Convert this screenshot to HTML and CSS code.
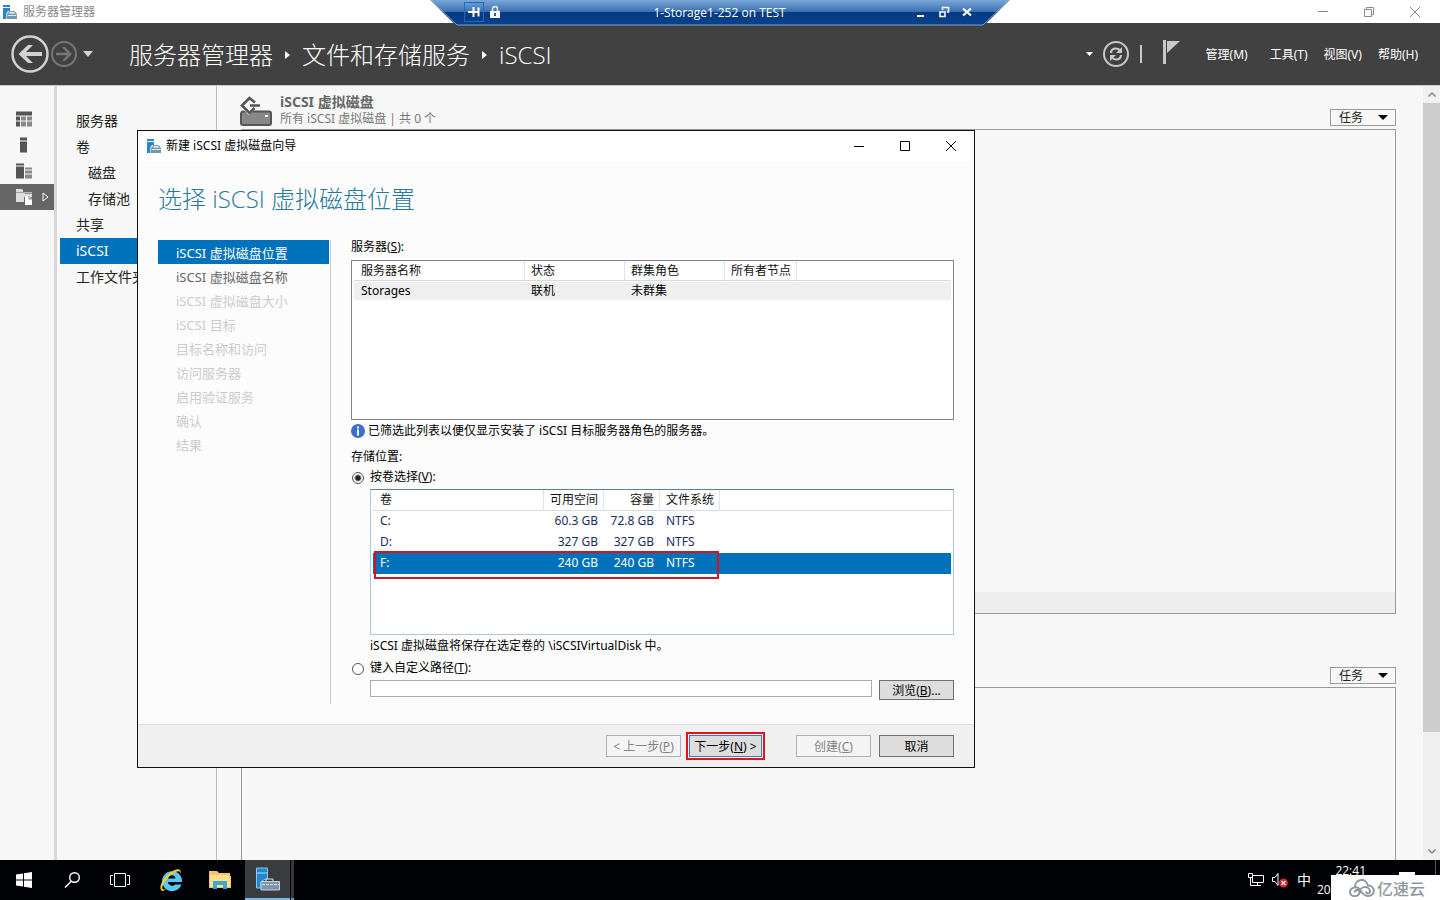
FILE: index.html
```html
<!DOCTYPE html>
<html lang="zh-CN">
<head>
<meta charset="utf-8">
<title>服务器管理器</title>
<link rel="stylesheet" href="styles.css">
</head>
<body>
<svg width="0" height="0" class="defs" aria-hidden="true">
  <symbol id="server" viewBox="0 0 14 14">
    <path d="M0 0h7v2H0zM0 3h7v3H5L3 9v5H0z" fill="#2588c8"/>
    <path d="M3.500 8.500h10.500V14H3.500z" fill="#7297b3"/>
    <path d="M5 8.500L7 6.500h4l2 2" fill="none" stroke="#7297b3" stroke-width="1.200"/>
    <path d="M4.500 10.500h9" stroke="#dce8f0"/>
  </symbol>
</svg>

<header class="titlebar">
  <svg class="app-icon" viewBox="0 0 14 14"><use href="#server"/></svg>
  <span class="titlebar-text">服务器管理器</span>
  <button class="caption" aria-label="最小化"><svg viewBox="0 0 12 12"><path d="M1 5.500h10"/></svg></button>
  <button class="caption" aria-label="还原"><svg viewBox="0 0 12 12"><path d="M1.500 3.500h7v7h-7zM3.500 3V1.500h7v7H9"/></svg></button>
  <button class="caption" aria-label="关闭"><svg viewBox="0 0 12 12"><path d="M1 1l10 10M11 1L1 11"/></svg></button>
</header>

<div class="rdp">
  <svg class="rdp-shape" viewBox="0 0 580 26" preserveAspectRatio="none">
    <defs><linearGradient id="rg" x1="0" y1="0" x2="0" y2="1"><stop offset="0" stop-color="#7ba7d8"/><stop offset=".46" stop-color="#3a70b0"/><stop offset=".48" stop-color="#053a80"/><stop offset="1" stop-color="#07428f"/></linearGradient></defs>
    <path d="M0 0h580l-26 25.500H26z" fill="url(#rg)"/>
    <path d="M1 0l26 25h526l26-25" fill="none" stroke="#8d9db3"/>
  </svg>
  <div class="rdp-row">
    <button class="rdp-btn pin" aria-label="固定"><svg viewBox="0 0 12 12"><path d="M0 6h5M5.500 1v10M6 6h5M10.500 1.500v9" stroke-width="2"/></svg></button>
    <svg class="lock" viewBox="0 0 10 12"><path d="M2.500 6V3a2.500 2.500 0 0 1 5 0v3" fill="none" stroke="#fff" stroke-width="1.400"/><path d="M0 5h10v7H0z" fill="#fff"/><path d="M5 7v3" stroke="#124" stroke-width="1.500"/></svg>
    <span class="rdp-title">1-Storage1-252 on TEST</span>
    <button class="rdp-btn" aria-label="最小化"><svg viewBox="0 0 12 12"><path d="M2 10h7" stroke-width="2"/></svg></button>
    <button class="rdp-btn" aria-label="还原"><svg viewBox="0 0 12 12"><path d="M2 6h5v4.500H2zM4.500 4V1.500h6V6H9" stroke-width="1.500"/></svg></button>
    <button class="rdp-btn" aria-label="关闭"><svg viewBox="0 0 12 12"><path d="M2 2.500l8 7M10 2.500l-8 7" stroke-width="2.200"/></svg></button>
  </div>
</div>

<div class="banner">
  <button class="round back" aria-label="后退"><svg viewBox="0 0 38 38"><circle cx="19" cy="19" r="17.500" fill="none" stroke="#d2d2d2" stroke-width="2.500"/><path d="M7.500 19L17 10h5l-7 7h16v4H15l7 7h-5z" fill="#d2d2d2"/></svg></button>
  <button class="round forward" aria-label="前进"><svg viewBox="0 0 26 26"><circle cx="13" cy="13" r="12" fill="none" stroke="#777" stroke-width="2"/><path d="M21 13l-7-7h-3l5 5.700H5v2.600h11L11 20h3z" fill="#777"/></svg></button>
  <button class="drop" aria-label="历史记录"><svg viewBox="0 0 10 6"><path d="M0 0h10L5 6z" fill="#d2d2d2"/></svg></button>
  <nav class="crumbs">
    <a href="#">服务器管理器</a><svg viewBox="0 0 5 8"><path d="M0 0l5 4-5 4z"/></svg><a href="#">文件和存储服务</a><svg viewBox="0 0 5 8"><path d="M0 0l5 4-5 4z"/></svg><a href="#">iSCSI</a>
  </nav>
  <svg class="mini-arrow" viewBox="0 0 7 4"><path d="M0 0h7L3.500 4z" fill="#fff"/></svg>
  <button class="refresh" aria-label="刷新"><svg viewBox="0 0 26 26"><g fill="none" stroke="#c8c8c8" stroke-width="2"><circle cx="13" cy="13" r="12"/><path d="M8 12c0-3 2-4.500 5-4.500 2 0 3 .5 4 2M18 14c0 3-2 4.500-5 4.500-2 0-3-.5-4-2" stroke-width="2.200"/></g><path d="M19 6v6h-6zM7 20v-6h6z" fill="#c8c8c8"/></svg></button>
  <span class="bar"></span>
  <button class="flag" aria-label="通知"><svg viewBox="0 0 17 24"><path d="M0 0h3v24H0zM4 1h13L4 13z" fill="#c8c8c8"/></svg></button>
  <nav class="menu"><button class="wide">管理(M)</button><button>工具(T)</button><button>视图(V)</button><button>帮助(H)</button></nav>
</div>

<main class="workspace">
  <nav class="rail">
    <button aria-label="仪表板"><svg viewBox="0 0 16 15"><path d="M0 0h16v4H0zM0 5h4v4H0zM0 10h4v5H0z" fill="#555"/><path d="M5 5h5v4H5zM11 5h5v4h-5zM5 10h5v5H5zM11 10h5v5h-5z" fill="#888"/></svg></button>
    <button aria-label="本地服务器"><svg viewBox="0 0 16 15"><path d="M4 0h7v3H4zM4 4h7v11H4z" fill="#555"/></svg></button>
    <button aria-label="所有服务器"><svg viewBox="0 0 16 15"><path d="M0 0h8v2H0zM0 3h8v12H0z" fill="#555"/><path d="M9 4h7v2H9zM9 7h7v3H9zM9 11h7v4H9z" fill="#888"/></svg></button>
    <button class="current" aria-label="文件和存储服务"><svg viewBox="0 0 16 16"><path d="M0 0h6l1 1v2H0zM0 3.500h9V5h7v3H8v5H0z" fill="#ddd"/><path d="M8 3h8v1.500H8z" fill="#bbb"/><path d="M9 7h4l3 3v6H9z" fill="#fff"/><path d="M13 7v3h3" fill="none" stroke="#666" stroke-width=".8"/></svg><svg class="rail-arrow" viewBox="0 0 7 10"><path d="M1 1l5 4-5 4z" fill="none" stroke="#fff"/></svg></button>
  </nav>
  <nav class="side">
    <a href="#">服务器</a><a href="#">卷</a><a class="sub" href="#">磁盘</a><a class="sub" href="#">存储池</a><a href="#">共享</a><a class="current" href="#">iSCSI</a><a href="#">工作文件夹</a>
  </nav>
  <div class="content">
    <section class="tile">
      <div class="tile-head">
        <svg class="tile-icon" viewBox="0 0 32 30"><path d="M3 15.500h26a2 2 0 0 1 2 2V27a2 2 0 0 1-2 2H3a2 2 0 0 1-2-2v-9.500a2 2 0 0 1 2-2z" fill="#888" stroke="#555" stroke-width="2"/><path d="M25 19h3v2h-3z" fill="#fff"/><path d="M9 1L0 10l9 9 9-9z" fill="#f7f7f7"/><path d="M15 6.500L9.500 2 2 9.500 9.500 17l5-5M10 9.500h10" fill="none" stroke="#555" stroke-width="2.600"/></svg>
        <div class="tile-name"><h2>iSCSI 虚拟磁盘</h2><p>所有 iSCSI 虚拟磁盘 | 共 0 个</p></div>
        <button class="tasks">任务<svg viewBox="0 0 10 5"><path d="M0 0h10L5 5z"/></svg></button>
      </div>
      <div class="panel"><div class="panel-foot"></div></div>
    </section>
    <section class="tile lower">
      <div class="tile-head"><button class="tasks">任务<svg viewBox="0 0 10 5"><path d="M0 0h10L5 5z"/></svg></button></div>
      <div class="panel"></div>
    </section>
  </div>
  <div class="scroll">
    <svg viewBox="0 0 8 5"><path d="M0.500 4.500L4 1l3.500 3.500"/></svg>
    <div class="track"><div class="thumb"></div></div>
    <svg viewBox="0 0 8 5"><path d="M0.500 .5L4 4 7.500 .5"/></svg>
  </div>
</main>

<form class="dialog" role="dialog" aria-labelledby="dlg-title">
  <div class="dlg-bar">
    <svg class="app-icon" viewBox="0 0 14 14"><use href="#server"/></svg>
    <span id="dlg-title" class="dlg-name">新建 iSCSI 虚拟磁盘向导</span>
    <button type="button" aria-label="最小化"><svg viewBox="0 0 12 12"><path d="M1 6.500h10"/></svg></button>
    <button type="button" aria-label="最大化"><svg viewBox="0 0 12 12"><path d="M1.500 1.500h9v9h-9z"/></svg></button>
    <button type="button" aria-label="关闭"><svg viewBox="0 0 12 12"><path d="M1 1l10 10M11 1L1 11"/></svg></button>
  </div>
  <h1>选择 iSCSI 虚拟磁盘位置</h1>
  <div class="dlg-body">
    <ol class="steps">
      <li class="current">iSCSI 虚拟磁盘位置</li><li class="next">iSCSI 虚拟磁盘名称</li><li>iSCSI 虚拟磁盘大小</li><li>iSCSI 目标</li><li>目标名称和访问</li><li>访问服务器</li><li>启用验证服务</li><li>确认</li><li>结果</li>
    </ol>
    <div class="fields">
      <div class="caption-line" id="srv">服务器(<u>S</u>):</div>
      <div class="listbox servers">
        <table aria-labelledby="srv">
          <colgroup><col class="c-name"><col class="c-100"><col class="c-100"><col class="c-owner"><col></colgroup>
          <thead><tr><th>服务器名称</th><th>状态</th><th>群集角色</th><th>所有者节点</th><td></td></tr></thead>
          <tbody><tr><td>Storages</td><td>联机</td><td>未群集</td><td></td><td></td></tr></tbody>
        </table>
      </div>
      <p class="info"><svg viewBox="0 0 14 14"><circle cx="7" cy="7" r="7" fill="#3d6fd0"/><path d="M6 2.500h2v2H6zM6 5.500h2v6H6z" fill="#fff"/></svg>已筛选此列表以便仅显示安装了 iSCSI 目标服务器角色的服务器。</p>
      <div class="group">存储位置:</div>
      <div class="choice"><input type="radio" name="loc" id="vol" checked><label for="vol">按卷选择(<u>V</u>):</label></div>
      <div class="listbox volumes">
        <table aria-label="卷">
          <colgroup><col class="c-name"><col class="c-60"><col class="c-cap"><col class="c-60"><col></colgroup>
          <thead><tr><th>卷</th><th class="num">可用空间</th><th class="num">容量</th><th>文件系统</th><td></td></tr></thead>
          <tbody>
            <tr><td>C:</td><td class="num">60.3 GB</td><td class="num">72.8 GB</td><td>NTFS</td><td></td></tr>
            <tr><td>D:</td><td class="num">327 GB</td><td class="num">327 GB</td><td>NTFS</td><td></td></tr>
            <tr class="selected"><td>F:</td><td class="num">240 GB</td><td class="num">240 GB</td><td>NTFS</td><td></td></tr>
          </tbody>
        </table>
        <div class="mark"></div>
      </div>
      <p class="note">iSCSI 虚拟磁盘将保存在选定卷的 \iSCSIVirtualDisk 中。</p>
      <div class="choice custom"><input type="radio" name="loc" id="path"><label for="path">键入自定义路径(<u>T</u>):</label></div>
      <div class="path-row"><input type="text" aria-label="自定义路径"><button type="button" class="btn browse">浏览(<u>B</u>)...</button></div>
    </div>
  </div>
  <div class="dlg-foot">
    <button type="button" class="btn" disabled>&lt; 上一步(<u>P</u>)</button>
    <button type="button" class="btn primary">下一步(<u>N</u>) &gt;</button>
    <button type="button" class="btn create" disabled>创建(<u>C</u>)</button>
    <button type="button" class="btn">取消</button>
  </div>
</form>

<footer class="taskbar">
  <button aria-label="开始"><svg class="s16" viewBox="0 0 16 16"><path d="M0 2.500l7-1v6H0zM8 1.300L16 0v7.500H8zM0 8.500h7v6l-7-1zM8 8.500h8V16l-8-1.300z" fill="#fff"/></svg></button>
  <button aria-label="搜索"><svg class="s16" viewBox="0 0 16 16"><path d="M1 15.500l6-6" stroke="#fff" stroke-width="1.500"/><circle cx="10.500" cy="5.500" r="4.800" fill="none" stroke="#fff" stroke-width="1.400"/></svg></button>
  <button aria-label="任务视图"><svg class="s20" viewBox="0 0 20 16"><path d="M4.500 1.500h11v13h-11zM3 3.500H.5v9H3M17 3.500h2.500v9H17" fill="none" stroke="#fff"/></svg></button>
  <button class="pinned" aria-label="Internet Explorer"><svg class="s24" viewBox="0 0 24 24"><path d="M22.500 16.500A10 10 0 1 1 23 12v2H9c.4 4 5.600 4.700 7 2.500zM9 10.500h7.500c-.5-4.300-7-4.300-7.500 0z" fill="#5cc6f2"/><path d="M2.500 22.500C-2 18 8 4.500 17 1.500c4-1 5.500.8 4 4.500.5-3-1.500-3.400-4-2.300C9.500 7.500 2 17 3.500 21c.7 1.300 3 .3 5-1-2 1.900-4.800 4-6 2.500z" fill="#f5cd35"/></svg></button>
  <button class="pinned" aria-label="文件资源管理器"><svg class="s22" viewBox="0 0 22 20"><path d="M0 1h8l2 2h11v3h1v12H0z" fill="#f2c861"/><path d="M1 5h19v2h1v10H1z" fill="#fbdf8f"/><path d="M4 19v-8h14v8h-4v-4H8v4z" fill="#3ea6d4"/></svg></button>
  <button class="active" aria-label="服务器管理器"><svg class="s24" viewBox="0 0 24 24"><path d="M.5 1h11v11H9l-4 3v6H.5z" fill="#1e88d0" stroke="#8bc5ed"/><path d="M.5 6h11" stroke="#b9ddf5"/><path d="M5 14.500h18.500V23H5z" fill="#7f95ab" stroke="#c5d2de"/><path d="M10 14v-2h7v2" fill="none" stroke="#d8e1e9"/><path d="M6 17.500h17" stroke="#d8e1e9" stroke-dasharray="3 1"/></svg></button>
  <span class="stack"></span>
  <div class="tray">
    <svg class="s16" viewBox="0 0 16 14"><path d="M4.500 2.500h11v7h-11zM9.500 10v2.500M6 12.500h7M.5.500h4v4h-4zM2.500 5v7.500H6" fill="none" stroke="#fff"/></svg>
    <svg class="s16 sound" viewBox="0 0 16 16"><path d="M.5 5.500H3l3-4v12l-3-4H.5z" fill="none" stroke="#fff"/><circle cx="11.500" cy="11" r="4.500" fill="#d92332"/><path d="M9.500 9l4 4M13.500 9l-4 4" stroke="#fff" stroke-width="1.200"/></svg>
    <span class="ime">中</span>
    <div class="clock"><span>22:41</span><span class="date">20</span></div>
  </div>
  <span class="notice"></span>
  <span class="peek"></span>
  <div class="watermark"><svg viewBox="0 0 26 18"><g fill="none" stroke="#91969d" stroke-width="2"><path d="M6 8C6 0 17-2 19 6.500c7.500 0 8 10.500 0 10.500-4 0-6-3-8-6-3-5-10-2-10 2 0 6 10 5 9.500 0-.5-3-5-2.500-4.500.5"/><path d="M11 14c-1-7 9-8 10-2 .5 3-4 3-4 .5"/></g></svg><span>亿速云</span></div>
</footer>
</body>
</html>
```

FILE: styles.css
```css
* { box-sizing: border-box; }
body {
  margin: 0; height: 100vh; display: flex; flex-direction: column; position: relative; overflow: hidden;
  font: 12px/18px "Noto Sans", "Noto Sans CJK SC", sans-serif; color: #000; background: #f7f7f7;
}
button { font: inherit; color: inherit; background: none; border: 0; padding: 0; }
a { color: inherit; text-decoration: none; }
h1, h2, p, ol { margin: 0; padding: 0; font-weight: 400; }
svg { display: block; flex: none; }
.defs { position: absolute; }

.titlebar { height: 23px; flex: none; display: flex; align-items: center; background: #fff; color: #888; padding-left: 3px; }
.app-icon { width: 14px; height: 14px; }
.titlebar-text { flex: 1; padding-left: 6px; }
.caption { width: 46px; height: 20px; display: grid; place-items: center; }
.caption svg { width: 12px; height: 12px; fill: none; stroke: #888; }
.caption:last-child { margin-right: 2px; }

.rdp { position: absolute; top: 0; left: 50%; width: 580px; height: 26px; margin-left: -290px; color: #fff; z-index: 3; }
.rdp-shape { position: absolute; width: 100%; height: 100%; }
.rdp-row { position: relative; height: 24px; display: flex; align-items: center; padding: 0 32px 0 34px; }
.rdp-btn { width: 23px; height: 20px; display: grid; place-items: center; }
.rdp-btn.pin { width: 20px; border: 1px solid #176cc4; }
.rdp-btn svg { width: 12px; height: 12px; fill: none; stroke: #fff; }
.lock { width: 10px; height: 12px; margin-left: 6px; }
.rdp-title { flex: 1; text-align: center; padding: 2px 0 0 30px; font-family: "Open Sans", sans-serif; }

.banner { height: 62px; flex: none; display: flex; align-items: center; background: #414141; color: #fff; padding: 0 21px 0 11px; }
.back svg { width: 38px; height: 38px; }
.forward { margin-left: 2px; }
.forward svg, .refresh svg { width: 26px; height: 26px; }
.drop { margin-left: 6px; }
.drop svg { width: 10px; height: 6px; }
.crumbs { flex: 1; display: flex; align-items: center; gap: 12px; margin-left: 36px; font: 300 24px/36px "Open Sans", "Noto Sans CJK SC", sans-serif; padding-top: 1px; white-space: nowrap; }
.crumbs svg { width: 5px; height: 8px; fill: #fff; }
.mini-arrow { width: 7px; height: 4px; margin-right: 10px; }
.bar { width: 2px; height: 18px; background: #c8c8c8; margin: 0 21px 0 11px; }
.flag svg { width: 17px; height: 24px; margin-bottom: 4px; }
.menu { display: flex; gap: 16px; margin-left: 26px; padding-top: 2px; white-space: nowrap; }
.menu .wide { margin-right: 6px; }
.menu { margin-right: 1px; }

.workspace { flex: 1; min-height: 0; display: flex; border-top: 1px solid #ccc; }
.rail { width: 57px; border-right: 3px solid #d9d9d9; padding-top: 20px; flex: none; }
.rail button { width: 100%; height: 26px; display: flex; align-items: center; gap: 10px; padding-left: 16px; }
.rail svg { width: 16px; height: 16px; }
.rail .rail-arrow { width: 7px; height: 10px; }
.rail .current { background: #666; }
.side { width: 160px; border-right: 1px solid #bbb; padding: 22px 0 0 3px; flex: none; overflow: hidden; }
.side a { display: block; height: 26px; line-height: 26px; font-size: 14px; padding-left: 16px; white-space: nowrap; color: #222; }
.side .sub { padding-left: 28px; }
.side .current { background: #0072bc; color: #fff; }
.content { flex: 1; min-width: 0; padding: 7px 27px 0 24px; display: flex; flex-direction: column; }
.tile-head { display: flex; align-items: flex-end; height: 36px; padding-bottom: 3px; }
.tile-icon { width: 32px; height: 30px; margin: 2px 8px 0 -1px; align-self: center; }
.tile-name { color: #666; align-self: flex-start; }
.tile-name h2 { font-size: 14px; line-height: 18px; font-weight: 700; }
.tile-name p { line-height: 16px; color: #777; }
.tasks { width: 66px; height: 17px; line-height: 15px; border: 1px solid #999; margin-left: auto; display: flex; align-items: center; justify-content: space-between; padding: 0 7px 0 8px; color: #222; }
.tasks svg { width: 10px; height: 5px; }
.panel { border: 1px solid #999; height: 485px; display: flex; align-items: flex-end; }
.panel-foot { flex: 1; height: 21px; background: #eee; }
.lower { padding-top: 37px; flex: 1; min-height: 0; display: flex; flex-direction: column; }
.lower .tile-head { flex: none; }
.lower .panel { flex: 1; height: auto; border-bottom: 0; }
.scroll { width: 17px; background: #f0f0f0; display: flex; flex-direction: column; align-items: center; padding: 6px 0; }
.scroll svg { width: 8px; height: 5px; fill: none; stroke: #888; stroke-width: 1.5; }
.track { flex: 1; width: 100%; padding: 6px 0; }
.thumb { height: 85%; background: #cdcdcd; }

.dialog { position: absolute; left: 137px; top: 130px; width: 838px; border: 1px solid #111; background: #fcfcfc; z-index: 2; }
.dlg-bar { height: 30px; display: flex; align-items: center; background: #fff; padding-left: 9px; }
.dlg-name { flex: 1; padding-left: 5px; }
.dlg-bar button { width: 46px; height: 28px; display: grid; place-items: center; }
.dlg-bar button svg { width: 12px; height: 12px; fill: none; stroke: #000; }
h1 { font: 300 24px/36px "Open Sans", "Noto Sans CJK SC", sans-serif; color: #27799b; margin: 20px 20px 23px; }
.dlg-body { display: flex; padding: 0 20px 20px; }
.steps { width: 173px; list-style: none; border-right: 1px solid #ccc; flex: none; min-height: 464px; padding-right: 1px; }
.steps li { height: 24px; line-height: 26px; font-size: 13px; padding-left: 18px; color: #ccc; white-space: nowrap; }
.steps .current { background: #0072bc; color: #fff; }
.steps .next { color: #666; }
.fields { flex: 1; min-width: 0; padding-left: 20px; }
.caption-line { line-height: 14px; margin-bottom: 6px; }
.listbox { background: #fff; border: 1px solid #828790; padding: 0 2px; position: relative; }
.servers { height: 160px; }
.volumes { height: 146px; margin: 3px 0 2px 19px; border-color: #abc9d6; border-top-color: #5b7f93; color: #1b2c62; }
table { width: 100%; table-layout: fixed; border-collapse: separate; border-spacing: 0; }
th, td { padding: 0 6px; font-weight: 400; text-align: left; white-space: nowrap; }
thead th, thead td { height: 20px; line-height: 18px; border-bottom: 1px solid #d5dbe0; color: #111; }
thead th { border-right: 1px solid #dde4ea; }
tr > :first-child { padding-left: 7px; }
thead .num { text-align: right; padding: 0 5px 0 0; }
tbody .num { text-align: right; padding: 0 6px 0 0; }
.servers tbody td { background: #efefef; border-top: 1px solid #fff; height: 19px; line-height: 18px; }
.volumes thead th, .volumes thead td { height: 21px; line-height: 20px; }
.volumes tbody td { height: 21px; line-height: 18px; padding-bottom: 2px; }
.volumes .selected td { background: #0072bc; color: #fff; }
.c-name { width: 171px; } .c-100 { width: 100px; } .c-owner { width: 72px; } .c-60 { width: 60px; } .c-cap { width: 56px; }
.mark { position: absolute; left: 3px; top: 61px; width: 345px; height: 28px; border: 2px solid #d3141d; }
.info { display: flex; align-items: center; gap: 3px; margin-top: 2px; }
.info svg { width: 14px; height: 14px; }
.group { margin: 8px 0 2px; }
.choice { height: 18px; display: flex; align-items: center; gap: 6px; }
.choice.custom { margin-top: 4px; }
.choice input { appearance: none; width: 12px; height: 12px; margin: 1px 0 0 1px; border: 1px solid #555; border-radius: 50%; background: #fff; }
.choice input:checked { background: radial-gradient(circle, #222 0 2px, #fff 4px); }
.note { margin-left: 19px; }
.path-row { display: flex; gap: 7px; margin: 3px 0 0 19px; }
.path-row input { flex: 1; min-width: 0; height: 17px; border: 1px solid #ababab; background: #fff; padding: 0 4px; font: inherit; }
.btn { width: 75px; height: 22px; padding-top: 1px; line-height: 18px; border: 1px solid #707070; background: #ddd; white-space: nowrap; }
.browse { height: 20px; line-height: 16px; }
.btn:disabled { background: #f4f4f4; border-color: #adb2b5; color: #838383; }
.dlg-foot { display: flex; justify-content: flex-end; gap: 8px; background: #f0f0f0; border-top: 1px solid #dfdfdf; padding: 10px 20px; }
.create { margin-left: 24px; }
.primary { width: 73px; margin-right: 2px; border-color: #3c7fb1; outline: 2px solid #e3111b; outline-offset: 1px; }

.taskbar { height: 40px; flex: none; background: #000206; color: #fff; display: flex; align-items: stretch; position: relative; }
.taskbar button { width: 48px; display: grid; place-items: center; }
.taskbar .pinned { width: 49px; padding-left: 5px; }
.taskbar .active { width: 45px; margin-left: 3px; background: #3b3c40; border-bottom: 2px solid #76b9ed; }
.stack { width: 3px; background: #35363a; border-bottom: 2px solid #5d94c2; margin-left: 1px; }
.s16 { width: 16px; height: 16px; } .s20 { width: 20px; height: 16px; } .s22 { width: 22px; height: 20px; } .s24 { width: 24px; height: 24px; }
.tray { margin-left: auto; display: flex; align-items: center; gap: 8px; padding-right: 74px; }
.ime { font-size: 14px; margin-left: 1px; }
.clock { width: 49px; display: flex; flex-direction: column; font: 12px/19px "Open Sans", sans-serif; margin-left: -2px; text-align: right; }
.clock .date { text-align: left; }
.notice { position: absolute; right: 25px; bottom: 25px; width: 16px; height: 3px; background: #fff; }
.peek { position: absolute; right: 4px; top: 0; width: 1px; height: 15px; background: #555; }
.watermark { position: absolute; right: 0; bottom: 0; width: 109px; height: 25px; background: #fff; color: #91969d; display: flex; align-items: center; gap: 2px; padding-left: 18px; font: 500 16px/24px "Noto Sans CJK SC", sans-serif; }
.watermark svg { width: 26px; height: 18px; }
```
